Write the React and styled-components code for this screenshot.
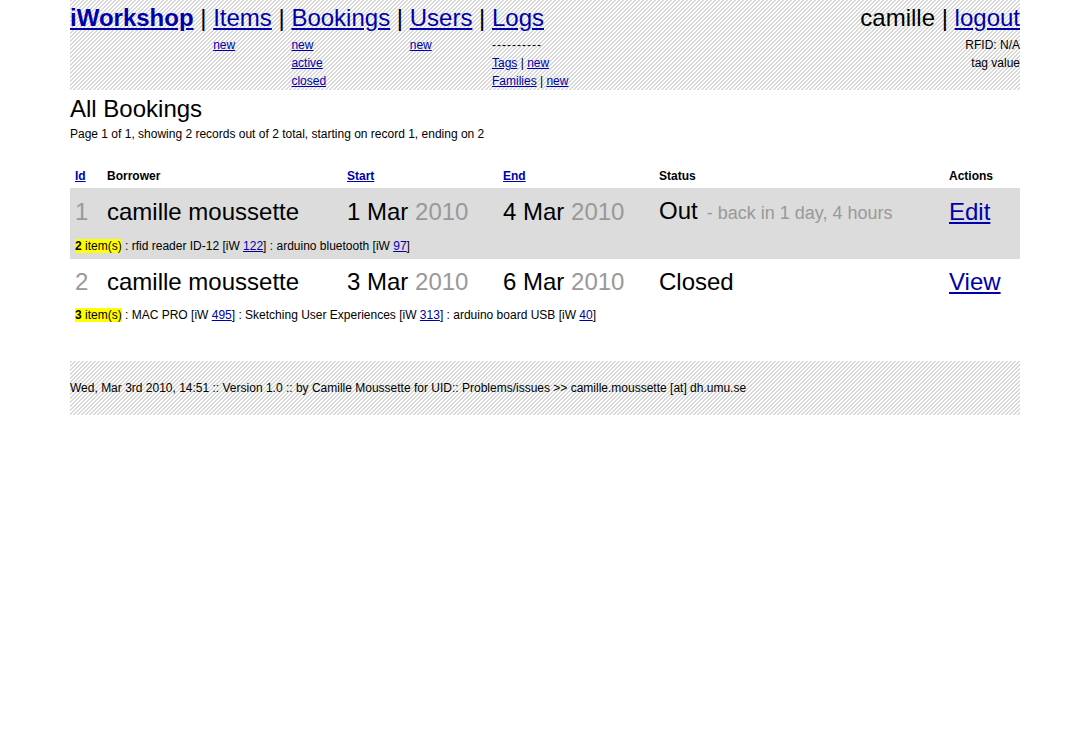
import React from "react";
import styled, { createGlobalStyle } from "styled-components";

const GlobalStyle = createGlobalStyle`
  body {
    margin: 0;
    background: #fff;
    color: #000;
    font-family: "Liberation Sans", Arial, Helvetica, sans-serif;
  }
  a {
    color: #0000aa;
  }
`;

const stripes = `
  background-color: #fff;
  background-image: linear-gradient(
    135deg,
    #d8d8d8 25%,
    #ffffff 25%,
    #ffffff 50%,
    #d8d8d8 50%,
    #d8d8d8 75%,
    #ffffff 75%
  );
  background-size: 4px 4px;
`;

const Page = styled.div`
  width: 950px;
  margin-left: 70px;
`;

const Header = styled.div`
  ${stripes}
  height: 90px;
  display: flex;
  justify-content: space-between;
`;

const Nav = styled.div`
  display: flex;
  align-items: flex-start;
`;

const NavColumn = styled.div`
  display: flex;
  flex-direction: column;
`;

const MainLine = styled.div`
  font-size: 24px;
  line-height: 36px;
  white-space: pre;
`;

const Brand = styled.a`
  font-weight: bold;
`;

const SubList = styled.div`
  display: flex;
  flex-direction: column;
  font-size: 12px;
  line-height: 18px;
`;

const Dashes = styled.span`
  color: #000;
  letter-spacing: 1px;
`;

const UserBox = styled.div`
  display: flex;
  flex-direction: column;
  align-items: flex-end;
`;

const Info = styled.div`
  font-size: 12px;
  line-height: 18px;
`;

const Title = styled.h1`
  font-size: 24px;
  font-weight: normal;
  margin: 5px 0 0;
  line-height: 28px;
`;

const Summary = styled.p`
  font-size: 12px;
  margin: 3px 0 0;
  line-height: 16px;
`;

const Table = styled.table`
  width: 950px;
  border-collapse: collapse;
  margin-top: 23px;
  table-layout: fixed;
`;

const Th = styled.th`
  font-size: 12px;
  font-weight: bold;
  text-align: left;
  padding: 3px 5px 4px;
  line-height: 16px;
  width: ${(p) => p.$w - 10}px;
`;

const Row = styled.tr`
  background: ${(p) => (p.$shade ? "#dcdcdc" : "transparent")};
`;

const Td = styled.td`
  font-size: 24px;
  padding: 10px 5px 7px;
  line-height: 26px;
  vertical-align: middle;
  white-space: nowrap;
`;

const Muted = styled.span`
  color: #999;
`;

const Note = styled.span`
  color: #999;
  font-size: 18px;
  margin-left: 4px;
`;

const ItemsCell = styled.td`
  font-size: 12px;
  padding: 5px 5px 5px;
  line-height: 16px;
`;

const Count = styled.span`
  background: #ffff00;
`;

const Footer = styled.div`
  ${stripes}
  height: 54px;
  margin-top: 33px;
  display: flex;
  align-items: center;
  font-size: 12px;
`;

const bookings = [
  {
    id: 1,
    who: "camille moussette",
    start: ["1 Mar", "2010"],
    end: ["4 Mar", "2010"],
    status: "Out",
    note: "- back in 1 day, 4 hours",
    action: "Edit",
    items: [
      ["rfid reader ID-12", "122"],
      ["arduino bluetooth", "97"],
    ],
  },
  {
    id: 2,
    who: "camille moussette",
    start: ["3 Mar", "2010"],
    end: ["6 Mar", "2010"],
    status: "Closed",
    action: "View",
    items: [
      ["MAC PRO", "495"],
      ["Sketching User Experiences", "313"],
      ["arduino board USB", "40"],
    ],
  },
];

const navs = [
  { label: "Items", sub: ["new"] },
  { label: "Bookings", sub: ["new", "active", "closed"] },
  { label: "Users", sub: ["new"] },
];

export default function App() {
  return (
    <>
      <GlobalStyle />
      <Page>
        <Header>
          <Nav>
            <NavColumn>
              <MainLine>
                <Brand href="#">iWorkshop</Brand>
                {" | "}
              </MainLine>
            </NavColumn>
            {navs.map((n) => (
              <NavColumn key={n.label}>
                <MainLine>
                  <a href="#">{n.label}</a>
                  {" | "}
                </MainLine>
                <SubList>
                  {n.sub.map((s) => (
                    <span key={s}>
                      <a href="#">{s}</a>
                    </span>
                  ))}
                </SubList>
              </NavColumn>
            ))}
            <NavColumn>
              <MainLine>
                <a href="#">Logs</a>
              </MainLine>
              <SubList>
                <Dashes>----------</Dashes>
                <span>
                  <a href="#">Tags</a> | <a href="#">new</a>
                </span>
                <span>
                  <a href="#">Families</a> | <a href="#">new</a>
                </span>
              </SubList>
            </NavColumn>
          </Nav>
          <UserBox>
            <MainLine>
              camille | <a href="#">logout</a>
            </MainLine>
            <Info>RFID: N/A</Info>
            <Info>tag value</Info>
          </UserBox>
        </Header>

        <Title>All Bookings</Title>
        <Summary>
          Page 1 of 1, showing 2 records out of 2 total, starting on record 1,
          ending on 2
        </Summary>

        <Table>
          <thead>
            <tr>
              <Th $w={32}>
                <a href="#">Id</a>
              </Th>
              <Th $w={240}>Borrower</Th>
              <Th $w={156}>
                <a href="#">Start</a>
              </Th>
              <Th $w={156}>
                <a href="#">End</a>
              </Th>
              <Th $w={290}>Status</Th>
              <Th $w={76}>Actions</Th>
            </tr>
          </thead>
          {bookings.map((b, i) => (
            <tbody key={b.id}>
              <Row $shade={i === 0}>
                <Td>
                  <Muted>{b.id}</Muted>
                </Td>
                <Td>{b.who}</Td>
                <Td>
                  {b.start[0]} <Muted>{b.start[1]}</Muted>
                </Td>
                <Td>
                  {b.end[0]} <Muted>{b.end[1]}</Muted>
                </Td>
                <Td>
                  {b.status}
                  {b.note && <Note> {b.note}</Note>}
                </Td>
                <Td>
                  <a href="#">{b.action}</a>
                </Td>
              </Row>
              <Row $shade={i === 0}>
                <ItemsCell colSpan={6}>
                  <Count>
                    <b>{b.items.length}</b> item(s)
                  </Count>
                  {b.items.map(([name, tag]) => (
                    <span key={tag}>
                      {" : "}
                      {name} [iW <a href="#">{tag}</a>]
                    </span>
                  ))}
                </ItemsCell>
              </Row>
            </tbody>
          ))}
        </Table>

        <Footer>
          Wed, Mar 3rd 2010, 14:51 :: Version 1.0 :: by Camille Moussette for
          UID:: Problems/issues &gt;&gt; camille.moussette [at] dh.umu.se
        </Footer>
      </Page>
    </>
  );
}
